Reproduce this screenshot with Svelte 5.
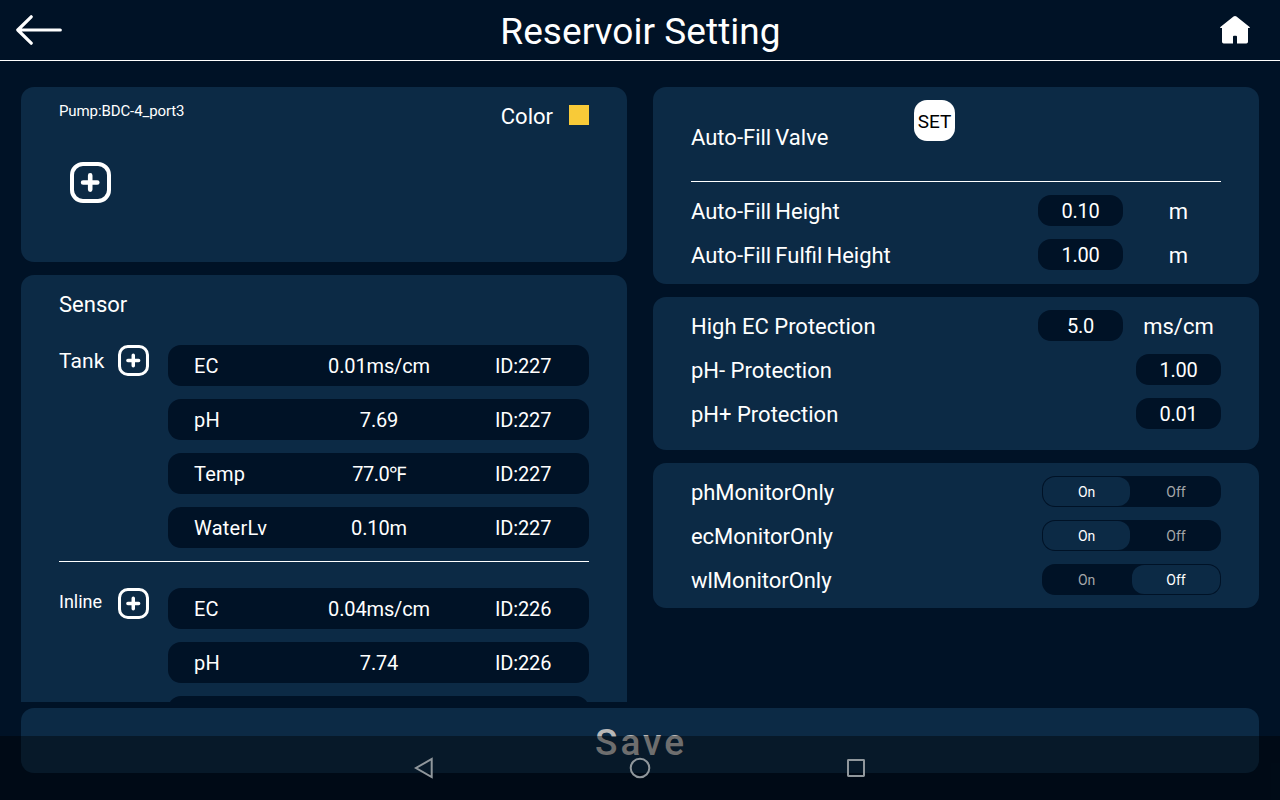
<script>
  const groups = [
    {
      name: 'Tank',
      rows: [
        ['EC', '0.01ms/cm', 'ID:227'],
        ['pH', '7.69', 'ID:227'],
        ['Temp', '77.0℉', 'ID:227'],
        ['WaterLv', '0.10m', 'ID:227']
      ]
    },
    {
      name: 'Inline',
      rows: [
        ['EC', '0.04ms/cm', 'ID:226'],
        ['pH', '7.74', 'ID:226'],
        ['', '', '']
      ]
    }
  ];
  const fill = [
    ['Auto-Fill Height', '0.10', 'm'],
    ['Auto-Fill Fulfil Height', '1.00', 'm']
  ];
  const protection = [
    ['High EC Protection', '5.0', 'ms/cm'],
    ['pH- Protection', '1.00', ''],
    ['pH+ Protection', '0.01', '']
  ];
  let monitors = $state([
    { name: 'phMonitorOnly', on: true },
    { name: 'ecMonitorOnly', on: true },
    { name: 'wlMonitorOnly', on: false }
  ]);
</script>

{#snippet plus(size)}
  <svg class="plus" width={size} height={size} viewBox="0 0 41 41" fill="none" stroke="#fff">
    <rect x="2" y="2" width="37" height="37" rx="11" stroke-width="4" />
    <path d="M20.2 13.4v14.200M13.100 20.500h14.200" stroke-width="4.600" stroke-linecap="round" />
  </svg>
{/snippet}

{#snippet field([label, value, unit])}
  <div class="field">
    <span class="label">{label}</span>
    <span class="pill">{value}</span>
    {#if unit}<span class="unit">{unit}</span>{/if}
  </div>
{/snippet}

<div class="screen">
  <header>
    <svg width="46" height="30" viewBox="0 0 46 30" fill="none" stroke="#fff" stroke-width="3.2" stroke-linecap="round" stroke-linejoin="round">
      <path d="M15.200 1.800L1.800 15l13.400 13.200M2 15h42.300" />
    </svg>
    <h1>Reservoir Setting</h1>
    <svg width="30" height="28" viewBox="0 0 30 28" fill="#fff">
      <path d="M15 0q.8 0 1.500.6L29.600 11q.8.900-.3 1H28v13.800q0 1.700-1.700 1.700H17v-6.700q0-1-1-1h-2q-1 0-1 1v6.700H3.700q-1.700 0-1.700-1.700V12H.7q-1.100-.1-.3-1L13.500.6Q14.200 0 15 0z" />
    </svg>
  </header>

  <main>
    <div class="col">
      <section class="card pump">
        <div class="pump-top">
          <span class="pump-name">Pump:BDC-4_port3</span>
          <span class="color">Color<i></i></span>
        </div>
        {@render plus(41)}
      </section>
      <section class="card sensor">
        <h2>Sensor</h2>
        {#each groups as g}
          <div class="group {g.name.toLowerCase()}">
            <div class="side">
              <span>{g.name}</span>
              {@render plus(31)}
            </div>
            <div class="rows">
              {#each g.rows as [kind, value, id]}
                <div class="row">
                  <span class="kind">{kind}</span>
                  <span class="mid" class:degrees={value.endsWith('℉')}>{value}</span>
                  <span class="id">{id}</span>
                </div>
              {/each}
            </div>
          </div>
        {/each}
      </section>
    </div>

    <div class="col">
      <section class="card valve">
        <div class="valve-top">
          <span class="label">Auto-Fill Valve</span>
          <button class="set">SET</button>
        </div>
        <div class="fields">
          {#each fill as f}{@render field(f)}{/each}
        </div>
      </section>
      <section class="card protect fields">
        {#each protection as f}{@render field(f)}{/each}
      </section>
      <section class="card monitor fields">
        {#each monitors as m}
          <div class="field">
            <span class="label">{m.name}</span>
            <div class="switch">
              <button class:active={m.on} onclick={() => (m.on = true)}>On</button>
              <button class:active={!m.on} onclick={() => (m.on = false)}>Off</button>
            </div>
          </div>
        {/each}
      </section>
    </div>
  </main>

  <button class="save">Save</button>

  <nav>
    <svg width="20" height="22" viewBox="0 0 20 22"><path d="M17.700 2v18L2 11z" /></svg>
    <svg width="22" height="22" viewBox="0 0 22 22"><circle cx="11" cy="11" r="9.300" /></svg>
    <svg width="20" height="20" viewBox="0 0 20 20"><rect x="2" y="2" width="16" height="16" rx=".4" /></svg>
  </nav>
</div>

<style>
  :global(body) { background: #001226; }
  * { box-sizing: border-box; }
  .screen {
    position: relative;
    width: 1280px;
    height: 800px;
    overflow: hidden;
    display: flex;
    flex-direction: column;
    background: #001226;
    color: #fff;
    font: 22px/26px Roboto, sans-serif;
  }
  button { border: 0; padding: 0; font: inherit; color: inherit; background: none; }
  header {
    flex: none;
    height: 61px;
    padding: 0 30px 0 16px;
    border-bottom: 1px solid #fff;
    display: grid;
    grid-template-columns: 60px 1fr 46px;
    align-items: center;
  }
  header svg:last-child { justify-self: end; }
  h1 {
    margin: 4px 0 0 1px;
    font-size: 37px;
    line-height: 44px;
    font-weight: 400;
    letter-spacing: 0.05px;
    text-align: center;
  }
  main {
    flex: none;
    height: 641px;
    padding: 26px 21px 0;
    display: grid;
    grid-template-columns: 606px 606px;
    column-gap: 26px;
    overflow: hidden;
  }
  .col { display: flex; flex-direction: column; gap: 13px; height: 615px; }
  .card { flex: none; background: #0c2a45; border-radius: 13px; padding: 0 38px; }
  .pump { height: 175px; padding-top: 13px; }
  .pump-top { display: flex; justify-content: space-between; height: 62px; }
  .pump-name { font-size: 15px; line-height: 22px; letter-spacing: -0.1px; }
  .color { display: flex; gap: 16px; height: 33px; line-height: 33px; }
  .color i { width: 20px; height: 20px; margin-top: 5px; background: #f8ca38; }
  .plus { display: block; flex: none; }
  .pump .plus { margin-left: 11px; }
  .sensor { height: 560px; padding-top: 17px; }
  h2 { margin: 0; font-size: 22px; line-height: 26px; font-weight: 400; }
  .group { display: flex; }
  .tank { padding: 27px 0 13px; border-bottom: 1px solid #fff; }
  .inline { padding-top: 26px; }
  .side { width: 109px; height: 31px; display: flex; align-items: center; font-size: 21px; }
  .side span { width: 59px; }
  .tank .side span { letter-spacing: 0.15px; }
  .inline .side { font-size: 18px; }
  .inline .side span { padding-bottom: 4px; }
  .rows { flex: 1; display: flex; flex-direction: column; gap: 13px; }
  .row {
    height: 41px;
    padding: 1px 26px 0;
    border-radius: 13px;
    background: #001226;
    display: grid;
    grid-template-columns: 112px 146px 1fr;
    align-items: center;
    font-size: 20px;
    letter-spacing: -0.15px;
  }
  .kind { letter-spacing: 0.25px; }
  .mid { text-align: center; }
  .degrees { letter-spacing: -0.5px; }
  .id { padding-left: 43px; }
  .valve { height: 197px; word-spacing: -1.3px; }
  .valve-top {
    height: 95px;
    padding-top: 13px;
    border-bottom: 1px solid #fff;
    display: flex;
  }
  .valve-top .label { width: 223px; padding-top: 25px; }
  .set {
    width: 41px;
    height: 41px;
    border-radius: 13px;
    background: #fff;
    color: #000;
    font-size: 19px;
    line-height: 43px;
    letter-spacing: -0.1px;
  }
  .fields { display: flex; flex-direction: column; gap: 13px; padding-top: 13px; }
  .protect { height: 153px; }
  .monitor { height: 145px; }
  .monitor .label { letter-spacing: -0.05px; }
  .field { height: 31px; display: flex; align-items: center; }
  .label { flex: 1; padding-top: 2px; }
  .valve-top .label { flex: none; }
  .pill {
    width: 85px;
    height: 31px;
    border-radius: 13px;
    background: #001226;
    text-align: center;
    font-size: 20px;
    line-height: 33px;
    letter-spacing: -0.2px;
  }
  .unit { width: 85px; margin-left: 13px; padding-top: 2px; text-align: center; }
  .switch {
    width: 179px;
    height: 31px;
    padding: 1px;
    border-radius: 13px;
    background: #001226;
    display: flex;
    justify-content: space-between;
  }
  .switch button {
    width: 88px;
    height: 29px;
    border-radius: 12px;
    color: #a5a7a9;
    font-size: 14px;
    line-height: 31px;
    letter-spacing: 0;
  }
  .switch button:first-child { width: 87px; letter-spacing: -0.2px; }
  .switch .active { background: #0c2a45; color: #fff; }
  .save {
    flex: none;
    width: 1238px;
    height: 65px;
    margin: 6px 21px 0;
    padding-left: 2px;
    border-radius: 13px;
    background: #0c2a45;
    color: #b8b8b8;
    font-size: 37px;
    line-height: 69px;
    font-weight: 500;
    letter-spacing: 3px;
  }
  nav {
    position: absolute;
    left: 0;
    right: 0;
    bottom: 0;
    height: 64px;
    padding: 0 414px;
    background: rgba(0, 0, 0, 0.4);
    display: flex;
    justify-content: space-between;
    align-items: center;
  }
  nav svg { fill: none; stroke: #90979c; stroke-width: 2; }
</style>
